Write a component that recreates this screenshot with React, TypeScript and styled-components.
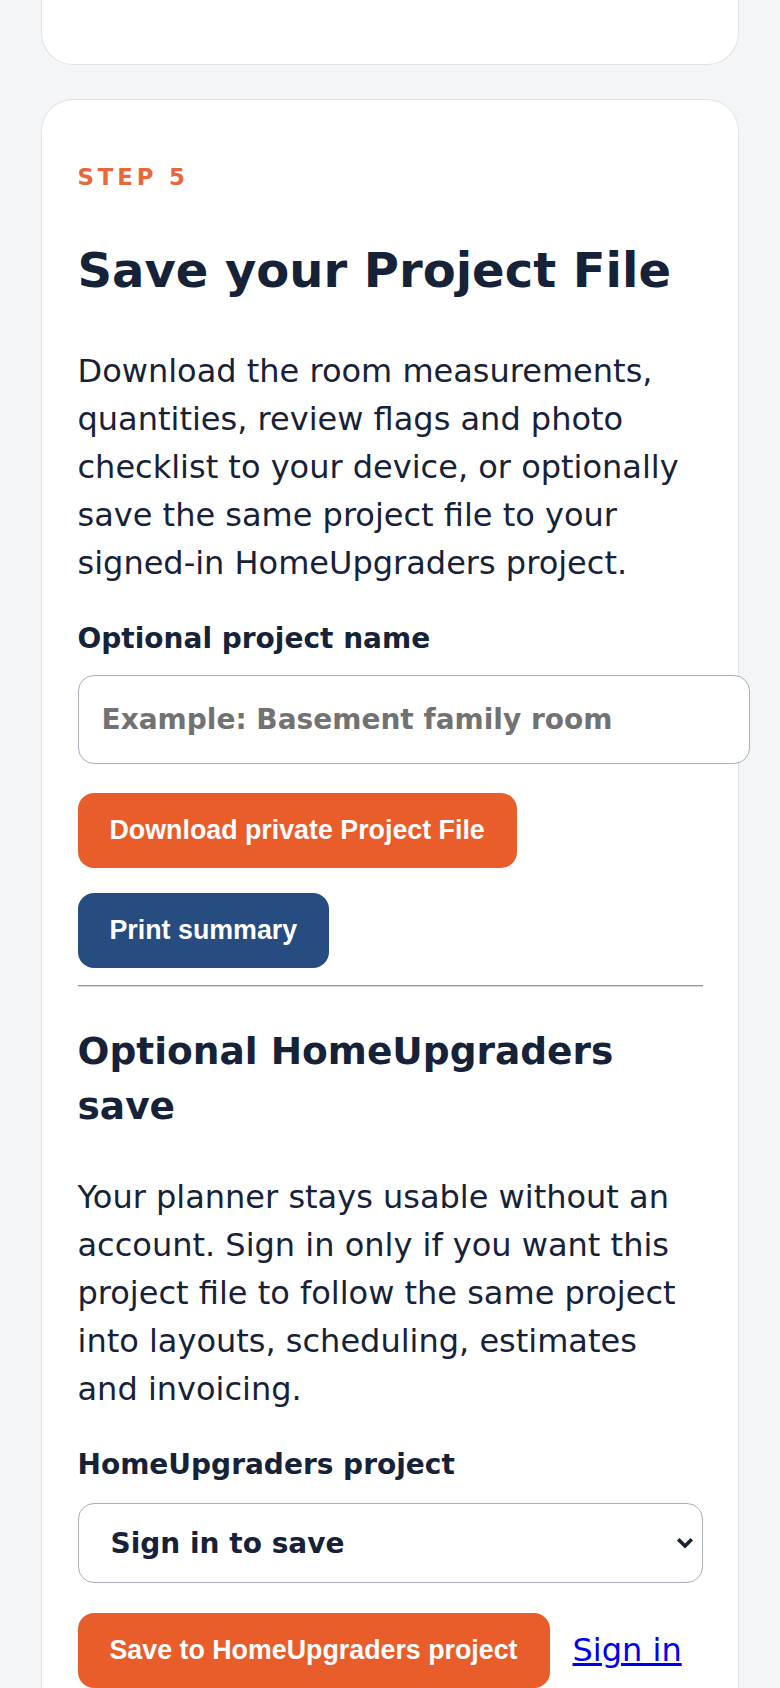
import React from "react";
import styled, { createGlobalStyle } from "styled-components";

const GlobalStyle = createGlobalStyle`
  html, body {
    margin: 0;
    padding: 0;
    background: #f4f5f7;
  }
  body {
    font-family: "DejaVu Sans", Verdana, sans-serif;
    color: #172238;
  }
  * {
    box-sizing: border-box;
  }
`;

export default function App() {
  return (
    <>
      <GlobalStyle />
      <Page>
        {/* previous step, only its bottom edge shows */}
        <Card $clipped />

        <Card>
          <Step>Step 5</Step>
          <Title>Save your Project File</Title>
          <Lead>
            Download the room measurements, quantities, review flags and photo
            checklist to your device, or optionally save the same project file
            to your signed-in HomeUpgraders project.
          </Lead>

          <FieldLabel htmlFor="project-name">Optional project name</FieldLabel>
          <NameInput
            id="project-name"
            type="text"
            placeholder="Example: Basement family room"
          />

          <ActionButton $tone="orange" $space={29.3}>
            Download private Project File
          </ActionButton>
          <ActionButton $tone="blue" $space={25}>
            Print summary
          </ActionButton>

          <Divider />

          <SubTitle>Optional HomeUpgraders save</SubTitle>
          <Body>
            Your planner stays usable without an account. Sign in only if you
            want this project file to follow the same project into layouts,
            scheduling, estimates and invoicing.
          </Body>

          <FieldLabel htmlFor="hu-project" $space={34.8}>
            HomeUpgraders project
          </FieldLabel>
          <SelectWrap>
            <ProjectSelect id="hu-project" defaultValue="signin">
              <option value="signin">Sign in to save</option>
            </ProjectSelect>
            <Chevron viewBox="0 0 18 12" aria-hidden="true">
              <path d="M2.2 2.2 L9 9 L15.8 2.2" />
            </Chevron>
          </SelectWrap>

          <SaveRow>
            <ActionButton $tone="orange" $space={0}>
              Save to HomeUpgraders project
            </ActionButton>
            <SignInLink href="#signin">Sign in</SignInLink>
          </SaveRow>
        </Card>
      </Page>
    </>
  );
}

const Page = styled.main`
  display: flex;
  flex-direction: column;
  gap: 33.7px;
  padding: 0 41px;
  min-height: 1688px;
`;

const Card = styled.section<{ $clipped?: boolean }>`
  background: #ffffff;
  border: 1.5px solid #dfe2e7;
  border-radius: 32px;
  padding: 64.4px 35.5px 40px;

  ${({ $clipped }) =>
    $clipped &&
    `
    height: 65px;
    padding: 0;
    border-top: none;
    border-radius: 0 0 32px 32px;
  `}
`;

const Step = styled.p`
  margin: 0;
  font-size: 22.8px;
  line-height: 26.88px;
  font-weight: 700;
  letter-spacing: 0.17em;
  text-transform: uppercase;
  color: #e8683a;
`;

const Title = styled.h2`
  margin: 51.2px 0 0;
  font-size: 48px;
  line-height: 57.6px;
  font-weight: 700;
  color: #152238;
`;

const Lead = styled.p`
  margin: 47.2px 0 0;
  font-size: 32px;
  line-height: 48px;
  color: #172238;
`;

const Body = styled(Lead)`
  margin-top: 39.2px;
`;

const FieldLabel = styled.label<{ $space?: number }>`
  display: block;
  margin-top: ${({ $space = 34.7 }) => $space}px;
  font-size: 28px;
  line-height: 33.6px;
  font-weight: 700;
  color: #152238;
`;

const NameInput = styled.input`
  display: block;
  width: calc(100% + 47px);
  height: 89px;
  margin-top: 19.6px;
  padding: 0 20px 0 23px;
  border: 1.5px solid #a9b0bb;
  border-radius: 16px;
  background: #ffffff;
  font-family: inherit;
  font-size: 28px;
  font-weight: 700;
  color: #172238;

  &::placeholder {
    color: #727272;
  }
`;

const ActionButton = styled.button<{ $tone: "orange" | "blue"; $space: number }>`
  display: block;
  flex-shrink: 0;
  margin-top: ${({ $space }) => $space}px;
  padding: 22px 32px;
  border: none;
  border-radius: 16px;
  background: ${({ $tone }) => ($tone === "orange" ? "#e95d2b" : "#274d80")};
  color: #ffffff;
  font-family: "Liberation Sans", Arial, sans-serif;
  font-size: 26.8px;
  line-height: 31px;
  font-weight: 700;
  white-space: nowrap;
  cursor: pointer;
`;

const Divider = styled.hr`
  height: 0;
  margin: 16.7px 0 0;
  border: none;
  border-top: 1px solid #9a9a9a;
  border-bottom: 1px solid #d4d4d4;
`;

const SubTitle = styled.h3`
  margin: 37.5px 0 0;
  font-size: 37.5px;
  line-height: 55px;
  font-weight: 700;
  color: #152238;
`;

const SelectWrap = styled.div`
  position: relative;
  margin-top: 21.6px;
`;

const ProjectSelect = styled.select`
  display: block;
  width: 100%;
  height: 80px;
  padding: 0 40px 0 32px;
  border: 1.5px solid #a9b0bb;
  border-radius: 16px;
  background: #ffffff;
  appearance: none;
  -webkit-appearance: none;
  font-family: inherit;
  font-size: 28px;
  font-weight: 700;
  color: #172238;
`;

const Chevron = styled.svg`
  position: absolute;
  right: 8.5px;
  top: 50%;
  width: 18px;
  height: 12px;
  transform: translateY(-50%);
  pointer-events: none;

  path {
    fill: none;
    stroke: #1b2330;
    stroke-width: 3.6;
    stroke-linecap: butt;
    stroke-linejoin: miter;
  }
`;

const SaveRow = styled.div`
  display: flex;
  align-items: center;
  gap: 23px;
  margin-top: 29.3px;
`;

const SignInLink = styled.a`
  font-size: 32px;
  line-height: 48px;
  color: #0000ee;
  text-decoration: underline;
`;
